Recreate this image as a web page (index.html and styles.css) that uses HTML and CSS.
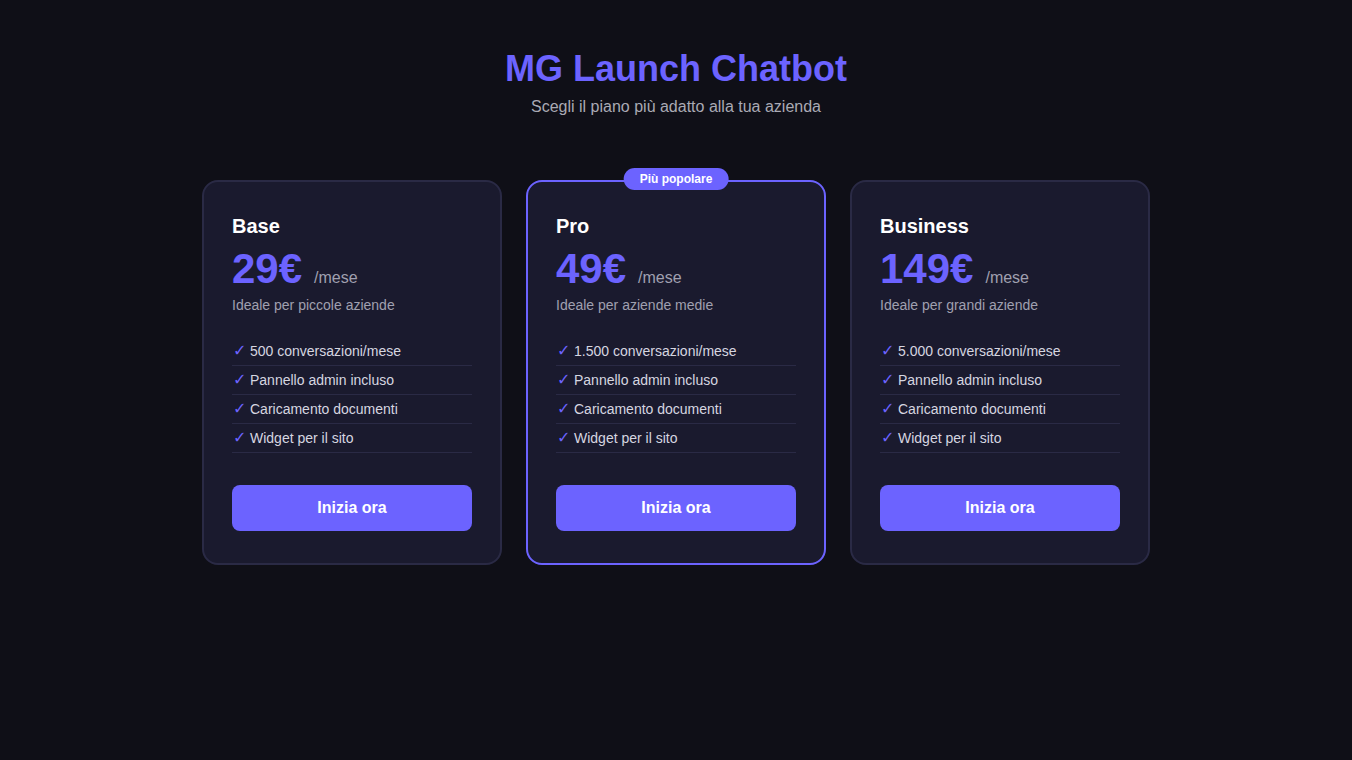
FILE: index.html
```html
<!DOCTYPE html>
<html lang="it">
<head>
<meta charset="utf-8">
<title>MG Launch Chatbot</title>
<link rel="stylesheet" href="styles.css">
</head>
<body>
<header class="header">
  <h1 class="title">MG Launch Chatbot</h1>
  <p class="subtitle">Scegli il piano più adatto alla tua azienda</p>
</header>
<main class="plans">
  <section class="card">
    <h3 class="plan-name">Base</h3>
    <div class="price"><span class="amount">29€</span><span class="period">/mese</span></div>
    <p class="desc">Ideale per piccole aziende</p>
    <ul class="features">
      <li><span class="check">✓</span>500 conversazioni/mese</li>
      <li><span class="check">✓</span>Pannello admin incluso</li>
      <li><span class="check">✓</span>Caricamento documenti</li>
      <li><span class="check">✓</span>Widget per il sito</li>
    </ul>
    <button class="btn">Inizia ora</button>
  </section>
  <section class="card card-featured">
    <span class="badge">Più popolare</span>
    <h3 class="plan-name">Pro</h3>
    <div class="price"><span class="amount">49€</span><span class="period">/mese</span></div>
    <p class="desc">Ideale per aziende medie</p>
    <ul class="features">
      <li><span class="check">✓</span>1.500 conversazioni/mese</li>
      <li><span class="check">✓</span>Pannello admin incluso</li>
      <li><span class="check">✓</span>Caricamento documenti</li>
      <li><span class="check">✓</span>Widget per il sito</li>
    </ul>
    <button class="btn">Inizia ora</button>
  </section>
  <section class="card">
    <h3 class="plan-name">Business</h3>
    <div class="price"><span class="amount">149€</span><span class="period">/mese</span></div>
    <p class="desc">Ideale per grandi aziende</p>
    <ul class="features">
      <li><span class="check">✓</span>5.000 conversazioni/mese</li>
      <li><span class="check">✓</span>Pannello admin incluso</li>
      <li><span class="check">✓</span>Caricamento documenti</li>
      <li><span class="check">✓</span>Widget per il sito</li>
    </ul>
    <button class="btn">Inizia ora</button>
  </section>
</main>
</body>
</html>
```
FILE: styles.css
```css
* { box-sizing: border-box; }
html, body { margin: 0; padding: 0; }
body {
  background: #0f0f17;
  font-family: "Liberation Sans", Arial, sans-serif;
  color: #e6e6f0;
  min-height: 760px;
}
.header {
  text-align: center;
  padding-top: 48px;
}
.title {
  margin: 0;
  font-size: 36px;
  font-weight: 700;
  color: #6c63ff;
  line-height: 41px;
}
.subtitle {
  margin: 9px 0 0;
  font-size: 16px;
  line-height: 18px;
  color: #aaaab4;
}
.plans {
  display: flex;
  justify-content: center;
  gap: 24px;
  margin-top: 64px;
}
.card {
  position: relative;
  width: 300px;
  background: #1a1a2e;
  border: 2px solid #2a2a45;
  border-radius: 16px;
  padding: 28px 28px 32px;
}
.card-featured {
  border-color: #6c63ff;
}
.badge {
  position: absolute;
  top: -14px;
  left: 50%;
  transform: translateX(-50%);
  background: #6c63ff;
  color: #fff;
  font-size: 12px;
  font-weight: 700;
  line-height: 14px;
  padding: 4px 16px;
  border-radius: 20px;
  white-space: nowrap;
}
.plan-name {
  margin: 5px 0 0;
  font-size: 20px;
  line-height: 23px;
  font-weight: 700;
  color: #ffffff;
}
.price {
  margin-top: 8px;
  display: flex;
  align-items: baseline;
}
.amount {
  font-size: 42px;
  line-height: 46px;
  font-weight: 700;
  color: #6c63ff;
}
.period {
  margin-left: 12px;
  font-size: 16px;
  color: #a0a0b0;
}
.desc {
  margin: 5px 0 0;
  font-size: 14px;
  line-height: 16px;
  color: #a0a0b0;
}
.features {
  list-style: none;
  margin: 24px 0 0;
  padding: 0;
}
.features li {
  font-size: 14px;
  line-height: 16px;
  color: #d6d6e0;
  padding: 6px 0;
  border-bottom: 1px solid #2a2a45;
}
.check {
  display: inline-block;
  width: 18px;
  font-family: "DejaVu Sans", sans-serif;
  font-size: 16px;
  line-height: 16px;
  color: #6c63ff;
  padding-left: 1px;
}
.btn {
  display: block;
  width: 100%;
  margin-top: 32px;
  height: 46px;
  border: none;
  border-radius: 8px;
  background: #6c63ff;
  color: #fff;
  font-family: "Liberation Sans", Arial, sans-serif;
  font-size: 16px;
  font-weight: 700;
}
```
